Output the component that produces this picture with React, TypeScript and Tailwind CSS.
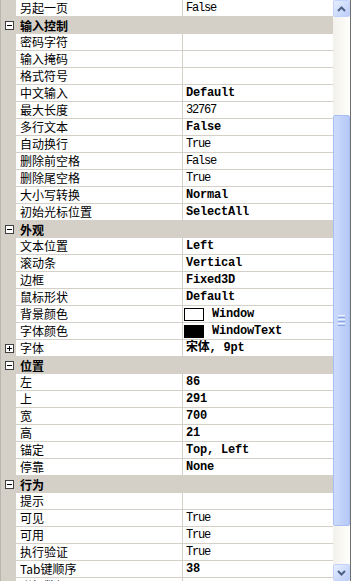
import React from "react";

type Row =
  | { cat: string }
  | { name: string; value?: string; bold?: boolean; swatch?: "white" | "black"; plus?: boolean };

const rows: Row[] = [
  { name: "另起一页", value: "False" },
  { cat: "输入控制" },
  { name: "密码字符" },
  { name: "输入掩码" },
  { name: "格式符号" },
  { name: "中文输入", value: "Default", bold: true },
  { name: "最大长度", value: "32767" },
  { name: "多行文本", value: "False", bold: true },
  { name: "自动换行", value: "True" },
  { name: "删除前空格", value: "False" },
  { name: "删除尾空格", value: "True" },
  { name: "大小写转换", value: "Normal", bold: true },
  { name: "初始光标位置", value: "SelectAll", bold: true },
  { cat: "外观" },
  { name: "文本位置", value: "Left", bold: true },
  { name: "滚动条", value: "Vertical", bold: true },
  { name: "边框", value: "Fixed3D", bold: true },
  { name: "鼠标形状", value: "Default", bold: true },
  { name: "背景颜色", value: "Window", bold: true, swatch: "white" },
  { name: "字体颜色", value: "WindowText", bold: true, swatch: "black" },
  { name: "字体", value: "宋体, 9pt", bold: true, plus: true },
  { cat: "位置" },
  { name: "左", value: "86", bold: true },
  { name: "上", value: "291", bold: true },
  { name: "宽", value: "700", bold: true },
  { name: "高", value: "21", bold: true },
  { name: "锚定", value: "Top, Left", bold: true },
  { name: "停靠", value: "None", bold: true },
  { cat: "行为" },
  { name: "提示" },
  { name: "可见", value: "True" },
  { name: "可用", value: "True" },
  { name: "执行验证", value: "True" },
  { name: "Tab键顺序", value: "38", bold: true },
  { name: "附加数据" },
];

function Toggle({ open }: { open: boolean }) {
  return (
    <div className="relative w-[9px] h-[9px] border border-[#404040] bg-white">
      <div className="absolute left-[1px] top-[3px] w-[5px] h-[1px] bg-black" />
      {!open && <div className="absolute left-[3px] top-[1px] w-[1px] h-[5px] bg-black" />}
    </div>
  );
}

function Arrow({ up }: { up: boolean }) {
  return (
    <svg width="9" height="6" viewBox="0 0 9 6">
      <path
        d={up ? "M1 5 L4.5 1.5 L8 5" : "M1 1 L4.5 4.5 L8 1"}
        fill="none"
        stroke="#4d6185"
        strokeWidth="2"
      />
    </svg>
  );
}

function ScrollButton({ up }: { up: boolean }) {
  return (
    <div className="h-[17px] w-full rounded-[2px] border border-[#c3d3fd] bg-gradient-to-br from-[#e6eefe] to-[#bccdf9] flex items-center justify-center">
      <Arrow up={up} />
    </div>
  );
}

export default function App() {
  return (
    <div className="w-[351px] h-[581px] overflow-hidden bg-white flex">
      <div className="flex-1 flex flex-col border-l border-[#b9b6ae] text-[12px] text-black">
        {rows.map((r, i) =>
          "cat" in r ? (
            <div key={i} className="h-[17px] shrink-0 flex items-center bg-[#d4d0c8]">
              <div className="w-[19px] shrink-0 flex items-center pl-[4px]">
                <Toggle open />
              </div>
              <span className="font-['Noto_Sans_CJK_SC',sans-serif] font-bold leading-[16px]">{r.cat}</span>
            </div>
          ) : (
            <div key={i} className="h-[17px] shrink-0 flex">
              <div className="w-[15px] shrink-0 bg-[#d4d0c8] flex items-center pl-[4px]">
                {r.plus && <Toggle open={false} />}
              </div>
              <div className="w-[167px] shrink-0 border-b border-r border-[#d4d0c8] pl-[4px] flex items-center">
                <span className="font-['Noto_Sans_CJK_SC',sans-serif] leading-[16px] whitespace-nowrap">{r.name}</span>
              </div>
              <div
                className={
                  r.swatch
                    ? "flex-1 border-b border-[#d4d0c8] pl-[1px] flex items-center gap-[8px]"
                    : "flex-1 border-b border-[#d4d0c8] pl-[3px] flex items-center gap-[8px]"
                }
              >
                {r.swatch && (
                  <div
                    className={
                      r.swatch === "white"
                        ? "w-[20px] h-[13px] border border-black bg-white"
                        : "w-[20px] h-[13px] border border-black bg-black"
                    }
                  />
                )}
                {r.value && (
                  <span
                    className={
                      r.bold
                        ? "font-['Liberation_Mono','Noto_Sans_CJK_SC',monospace] text-[12px] font-bold tracking-[-0.2px] leading-[16px] whitespace-nowrap"
                        : "font-['Liberation_Mono','Noto_Sans_CJK_SC',monospace] text-[12px] tracking-[-1.2px] leading-[16px] whitespace-nowrap"
                    }
                  >
                    {r.value}
                  </span>
                )}
              </div>
            </div>
          )
        )}
      </div>
      <div className="w-[18px] shrink-0 h-full flex flex-col bg-[#f5f4ef] border-r border-[#6f6f6f]">
        <ScrollButton up />
        <div className="flex-1 pt-[98px] pb-[38px] bg-gradient-to-r from-[#f3f1ec] to-[#fefefb]">
          <div className="h-full rounded-[2px] border border-[#a9bff3] bg-gradient-to-r from-[#cddbfc] to-[#b5c9f7] flex flex-col items-center justify-center gap-[1px]">
            <div className="w-[7px] h-[1px] bg-[#eef3fe]" />
            <div className="w-[7px] h-[1px] bg-[#8ca6e3]" />
            <div className="w-[7px] h-[1px] bg-[#eef3fe]" />
            <div className="w-[7px] h-[1px] bg-[#8ca6e3]" />
            <div className="w-[7px] h-[1px] bg-[#eef3fe]" />
            <div className="w-[7px] h-[1px] bg-[#8ca6e3]" />
          </div>
        </div>
        <ScrollButton up={false} />
      </div>
    </div>
  );
}
